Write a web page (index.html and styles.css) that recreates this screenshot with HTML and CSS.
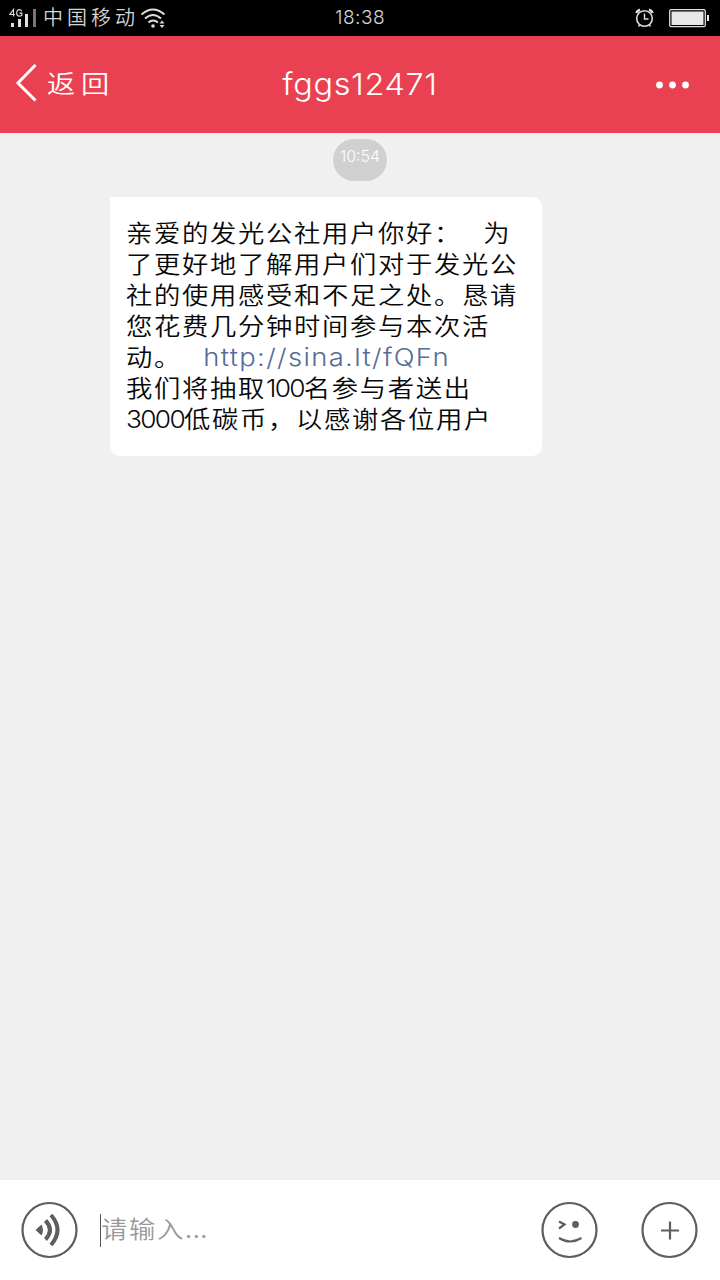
FILE: index.html
```html
<!DOCTYPE html>
<html lang="zh-CN">
<head>
<meta charset="utf-8">
<title>fggs12471</title>
<link rel="stylesheet" href="styles.css">
</head>
<body>
<div class="screen">
  <div class="status">
    <svg class="signal" width="30" height="36" viewBox="0 0 30 36">
      <g fill="none" stroke="#d8d8d8" stroke-width="1.2"><path d="M4.500 16.500v-7L.8 14.500h5M12.800 11.200c-.5-1.200-1.400-1.600-2.400-1.600-1.800 0-2.700 1.400-2.700 3.400s.9 3.200 2.600 3.200c1 0 1.900-.4 2.600-1v-2h-2.500"/></g>
      <path fill="#e0e0e0" d="M2 23h3v4H2zM9 19h3v8H9zM16 14h3v13h-3z"/><path fill="#777" d="M24 9h3v18h-3z"/>
    </svg>
    <span class="carrier">中国移动</span>
    <svg class="wifi" width="28" height="36" viewBox="0 0 28 36">
      <g fill="none" stroke="#ddd" stroke-width="2"><path d="M1.500 14.500Q13 4.500 24.500 14.500M5 18.500Q13 11.500 21 18.500M8.500 22.500Q13 18.500 18 22.500"/></g>
      <circle cx="13" cy="26" r="1.800" fill="#ddd"/><path fill="#ddd" d="m19.500 23.500 2.500-3 2.500 3zm0 1.500h5L22 28z"/>
    </svg>
    <span class="clock">18:38</span>
    <svg class="alarm" width="20" height="36" viewBox="0 0 20 36" fill="none" stroke="#ddd">
      <circle cx="9.500" cy="18.500" r="7.800" stroke-width="1.600"/><path stroke-width="1.400" d="M9.500 13.500v5.500h4M4.500 25l-1 1.500M14.500 25l1 1.500"/><path stroke-width="2.500" d="M1.300 13Q2.300 10.500 5 9.700M17.700 13Q16.700 10.500 14 9.700"/>
    </svg>
    <svg class="battery" width="40" height="36" viewBox="0 0 40 36"><rect x=".7" y="9.700" width="35.600" height="17" rx="1.500" fill="none" stroke="#ddd" stroke-width="1.300"/><path fill="#e8e8e8" d="M2.500 11.500h32v13.500h-32zM38 15h2v6h-2z"/></svg>
  </div>
  <div class="header">
    <svg class="chevron" width="24" height="40" viewBox="0 0 24 40"><path d="M20.500 2 3 20l17.500 17.500" fill="none" stroke="#fff" stroke-width="3"/></svg>
    <span class="back">返回</span>
    <span class="title">fggs12471</span>
    <svg class="more" width="34" height="8" viewBox="0 0 34 8" fill="#fff"><circle cx="3.500" cy="4" r="3.400"/><circle cx="16.500" cy="4" r="3.400"/><circle cx="29.500" cy="4" r="3.400"/></svg>
  </div>
  <div class="chat">
    <span class="time">10:54</span>
    <div class="bubble">
      <div class="line">亲爱的发光公社用户你好：<span class="gap"></span>为</div>
      <div class="line">了更好地了解用户们对于发光公</div>
      <div class="line">社的使用感受和不足之处。恳请</div>
      <div class="line">您花费几分钟时间参与本次活</div>
      <div class="line">动。<span class="gap"></span><span class="link">http://sina.lt/fQFn</span></div>
      <div class="line">我们将抽取<span class="num">100</span>名参与者送出</div>
      <div class="line"><span class="num">3000</span>低碳币，以感谢各位用户</div>
    </div>
  </div>
  <div class="composer">
    <svg width="58" height="58" viewBox="0 0 58 58"><g fill="none" stroke="#5e5e5c"><circle cx="29.500" cy="29" r="27" stroke-width="2.200"/><path stroke-width="4" d="M25.500 19.500q9 9.500 0 19M31 14q13 15 0 30"/></g><path fill="#5e5e5c" d="m15.500 29 6-5.500q3 5.500 0 11z"/></svg>
    <div class="field"><span class="caret"></span><span class="placeholder">请输入<span class="dots">...</span></span></div>
    <svg class="smile" width="58" height="58" viewBox="0 0 58 58"><g fill="none" stroke="#5e5e5c" stroke-width="2.200"><circle cx="28.500" cy="29" r="27"/><path d="m18 20.500 5.500 3-5.500 4M18 37q11 7 22.500 0"/></g><circle cx="34.500" cy="23.500" r="3.400" fill="#5e5e5c"/></svg>
    <svg width="58" height="58" viewBox="0 0 58 58" fill="none" stroke="#5e5e5c" stroke-width="2.200"><circle cx="28.500" cy="29" r="27"/><path d="M20 29.500h18M29 20.500v18"/></svg>
  </div>
</div>
</body>
</html>
```
FILE: styles.css
```css
body {
  margin: 0;
  font-family: Inter, "Noto Sans CJK SC", sans-serif;
}
svg { display: block; flex: none; }
.screen {
  width: 720px;
  height: 1280px;
  display: flex;
  flex-direction: column;
  background: #f0f0f0;
}
.status {
  height: 36px;
  display: flex;
  align-items: center;
  background: #000;
  color: #d4d4d4;
  white-space: nowrap;
}
.signal { margin-left: 9px; }
.carrier {
  width: 97px;
  margin-left: 4px;
  padding-bottom: 3px;
  font: 350 20px/30px "Noto Sans CJK SC", sans-serif;
  letter-spacing: 4px;
}
.clock {
  width: 60px;
  margin-left: 167px;
  font-size: 19px;
  font-weight: 300;
  line-height: 36px;
  letter-spacing: .5px;
}
.alarm { margin-left: 240px; }
.battery { margin-left: 14px; }
.header {
  height: 97px;
  display: grid;
  grid-template-columns: 47px 190px 1fr 237px;
  align-items: center;
  background: #e94151;
  color: #fff;
}
.chevron { margin: 0 0 3px 15px; }
.back {
  padding-bottom: 5px;
  font: 350 25px/40px "Noto Sans CJK SC", sans-serif;
  letter-spacing: 5px;
  transform: scaleX(1.13);
  transform-origin: 0 50%;
}
.title {
  padding-bottom: 1px;
  font-size: 30px;
  font-weight: 350;
  line-height: 40px;
  letter-spacing: .6px;
  text-align: center;
  transform: scaleX(1.08);
}
.more { justify-self: end; margin: 0 30px 0 0; }
.chat { flex: 1; padding-top: 6px; }
.time {
  display: block;
  box-sizing: border-box;
  width: 54px;
  height: 42px;
  margin: 0 auto;
  border-radius: 21px;
  background: #d0d0d0;
  color: #fff;
  font-size: 16px;
  font-weight: 300;
  line-height: 35px;
  text-align: center;
}
.bubble {
  box-sizing: border-box;
  width: 432px;
  height: 259px;
  margin: 16px 0 0 110px;
  padding: 21px 16px 19px;
  border-radius: 0 10px 10px 10px;
  background: #fff;
  color: #080808;
}
/* Flattened lettering: 28px advance per ideograph after scaling */
.line {
  height: 31px;
  font: 350 23.5px/31px Inter, "Noto Sans CJK SC", sans-serif;
  letter-spacing: 1.5px;
  white-space: nowrap;
  transform: scaleX(1.12);
  transform-origin: 0 50%;
}
.gap { display: inline-block; width: 19px; }
.link { color: #566b99; font-size: 24.5px; letter-spacing: 1.2px; }
.num { font-size: 23.5px; letter-spacing: -1.5px; }
.composer {
  height: 100px;
  display: flex;
  align-items: center;
  box-sizing: border-box;
  padding: 0 21px 0 20px;
  background: #fff;
}
.field {
  flex: 1;
  display: flex;
  align-items: center;
  margin-left: 22px;
}
.caret { width: 1px; height: 33px; background: #555; }
.placeholder {
  padding-bottom: 4px;
  color: #999;
  font: 350 23.5px/36px "Noto Sans CJK SC", sans-serif;
  letter-spacing: 1.5px;
  transform: scaleX(1.12);
  transform-origin: 0 50%;
}
.dots { letter-spacing: .5px; }
.smile { margin-right: 42px; }
```
